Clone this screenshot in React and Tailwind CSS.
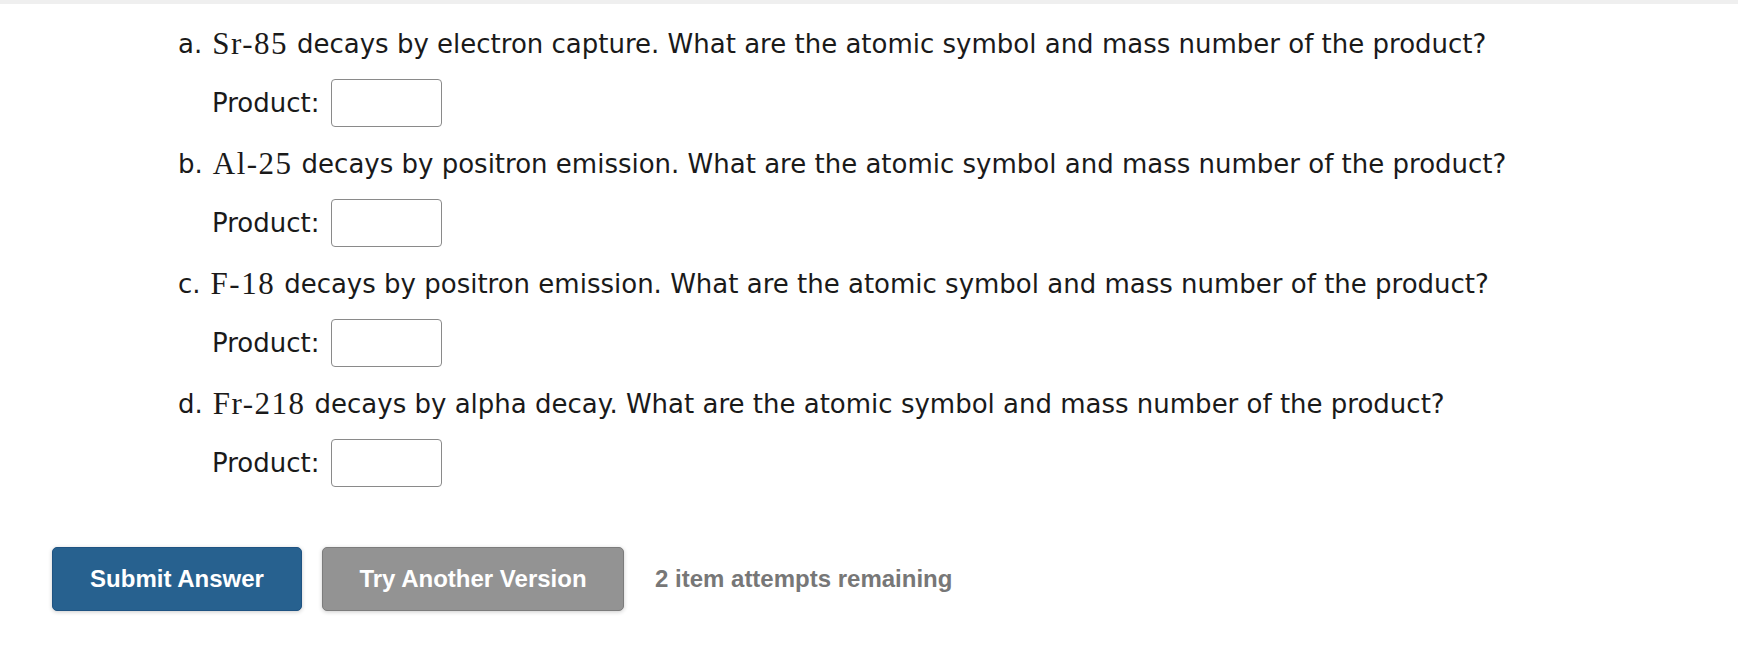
import React from 'react';

const questions = [
  { letter: 'a.', nuclide: 'Sr-85', rest: 'decays by electron capture. What are the atomic symbol and mass number of the product?' },
  { letter: 'b.', nuclide: 'Al-25', rest: 'decays by positron emission. What are the atomic symbol and mass number of the product?' },
  { letter: 'c.', nuclide: 'F-18', rest: 'decays by positron emission. What are the atomic symbol and mass number of the product?' },
  { letter: 'd.', nuclide: 'Fr-218', rest: 'decays by alpha decay. What are the atomic symbol and mass number of the product?' },
];

export default function App() {
  return (
    <div className="min-h-[666px] w-full bg-white">
      <div className="h-[4px] w-full bg-[#efefef]" />

      <div className="pl-[178px] pt-[20px] font-['DejaVu_Sans',Verdana,sans-serif] text-[26px] text-[#1a1a1a]">
        {questions.map((q) => (
          <div key={q.letter} className="pb-[17px]">
            <p className="flex h-[40px] items-center whitespace-nowrap">
              <span>{q.letter}</span>
              <span className="ml-[10px] mr-[9px] font-['Liberation_Serif',serif] text-[31px] tracking-[1.5px]">
                {q.nuclide}
              </span>
              <span>{q.rest}</span>
            </p>
            <div className="mt-[15px] flex h-[48px] items-center gap-[12px] pl-[34px]">
              <label>Product:</label>
              <input
                type="text"
                aria-label={`Product ${q.letter}`}
                className="h-[48px] w-[111px] rounded-[4px] border border-[#8a8a8a] bg-white px-2 outline-none"
              />
            </div>
          </div>
        ))}
      </div>

      <div className="mt-[43px] flex items-center pl-[52px] font-['Liberation_Sans',Arial,sans-serif] text-[24px] font-bold">
        <button className="h-[64px] w-[250px] rounded-[5px] border border-[#1f5382] bg-[#27618f] text-white shadow-[0_1px_4px_rgba(0,0,0,0.2)]">
          Submit Answer
        </button>
        <button className="ml-[20px] h-[64px] w-[302px] rounded-[5px] border border-[#7c7c7c] bg-[#939393] text-white shadow-[0_1px_4px_rgba(0,0,0,0.2)]">
          Try Another Version
        </button>
        <span className="ml-[31px] text-[#777777]">2 item attempts remaining</span>
      </div>
    </div>
  );
}
